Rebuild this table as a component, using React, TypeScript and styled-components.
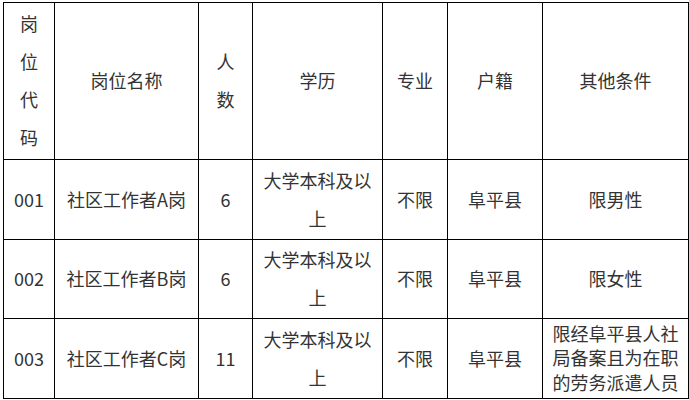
import React from "react";
import styled, { createGlobalStyle } from "styled-components";

const GlobalStyle = createGlobalStyle`
  html, body {
    margin: 0;
    padding: 0;
    background: #fff;
  }
  body {
    font-family: "Noto Sans CJK SC", "Microsoft YaHei", "Noto Sans", sans-serif;
  }
`;

const Page = styled.div`
  padding: 2px 0 0 3px;
`;

const Table = styled.table`
  border-collapse: collapse;
  table-layout: fixed;
  width: 685px;
  color: #333;
  font-size: 18px;
`;

const Row = styled.tr<{ $h: number }>`
  height: ${(p) => p.$h}px;
`;

const Cell = styled.td<{ $tight?: boolean }>`
  border: 1px solid #000;
  text-align: center;
  vertical-align: middle;
  padding: 0 8px 2px;
  line-height: ${(p) => (p.$tight ? "24.5px" : "38px")};
  word-break: break-all;
`;

const widths = [51, 144, 54, 130, 65, 95, 146];

const rows = [
  { code: "001", name: "社区工作者A岗", num: "6", other: "限男性" },
  { code: "002", name: "社区工作者B岗", num: "6", other: "限女性" },
  { code: "003", name: "社区工作者C岗", num: "11", other: "限经阜平县人社局备案且为在职的劳务派遣人员" },
];

const heights = [80, 79, 80];

export default function App() {
  return (
    <Page>
      <GlobalStyle />
      <Table>
        <colgroup>
          {widths.map((w, i) => (
            <col key={i} style={{ width: w }} />
          ))}
        </colgroup>
        <tbody>
          <Row $h={157}>
            <Cell>岗位代码</Cell>
            <Cell>岗位名称</Cell>
            <Cell>
              人<br />数
            </Cell>
            <Cell>学历</Cell>
            <Cell>专业</Cell>
            <Cell>户籍</Cell>
            <Cell>其他条件</Cell>
          </Row>
          {rows.map((r, i) => (
            <Row $h={heights[i]} key={r.code}>
              <Cell>{r.code}</Cell>
              <Cell>{r.name}</Cell>
              <Cell>{r.num}</Cell>
              <Cell>大学本科及以上</Cell>
              <Cell>不限</Cell>
              <Cell>阜平县</Cell>
              <Cell $tight={r.other.length > 8}>{r.other}</Cell>
            </Row>
          ))}
        </tbody>
      </Table>
    </Page>
  );
}
